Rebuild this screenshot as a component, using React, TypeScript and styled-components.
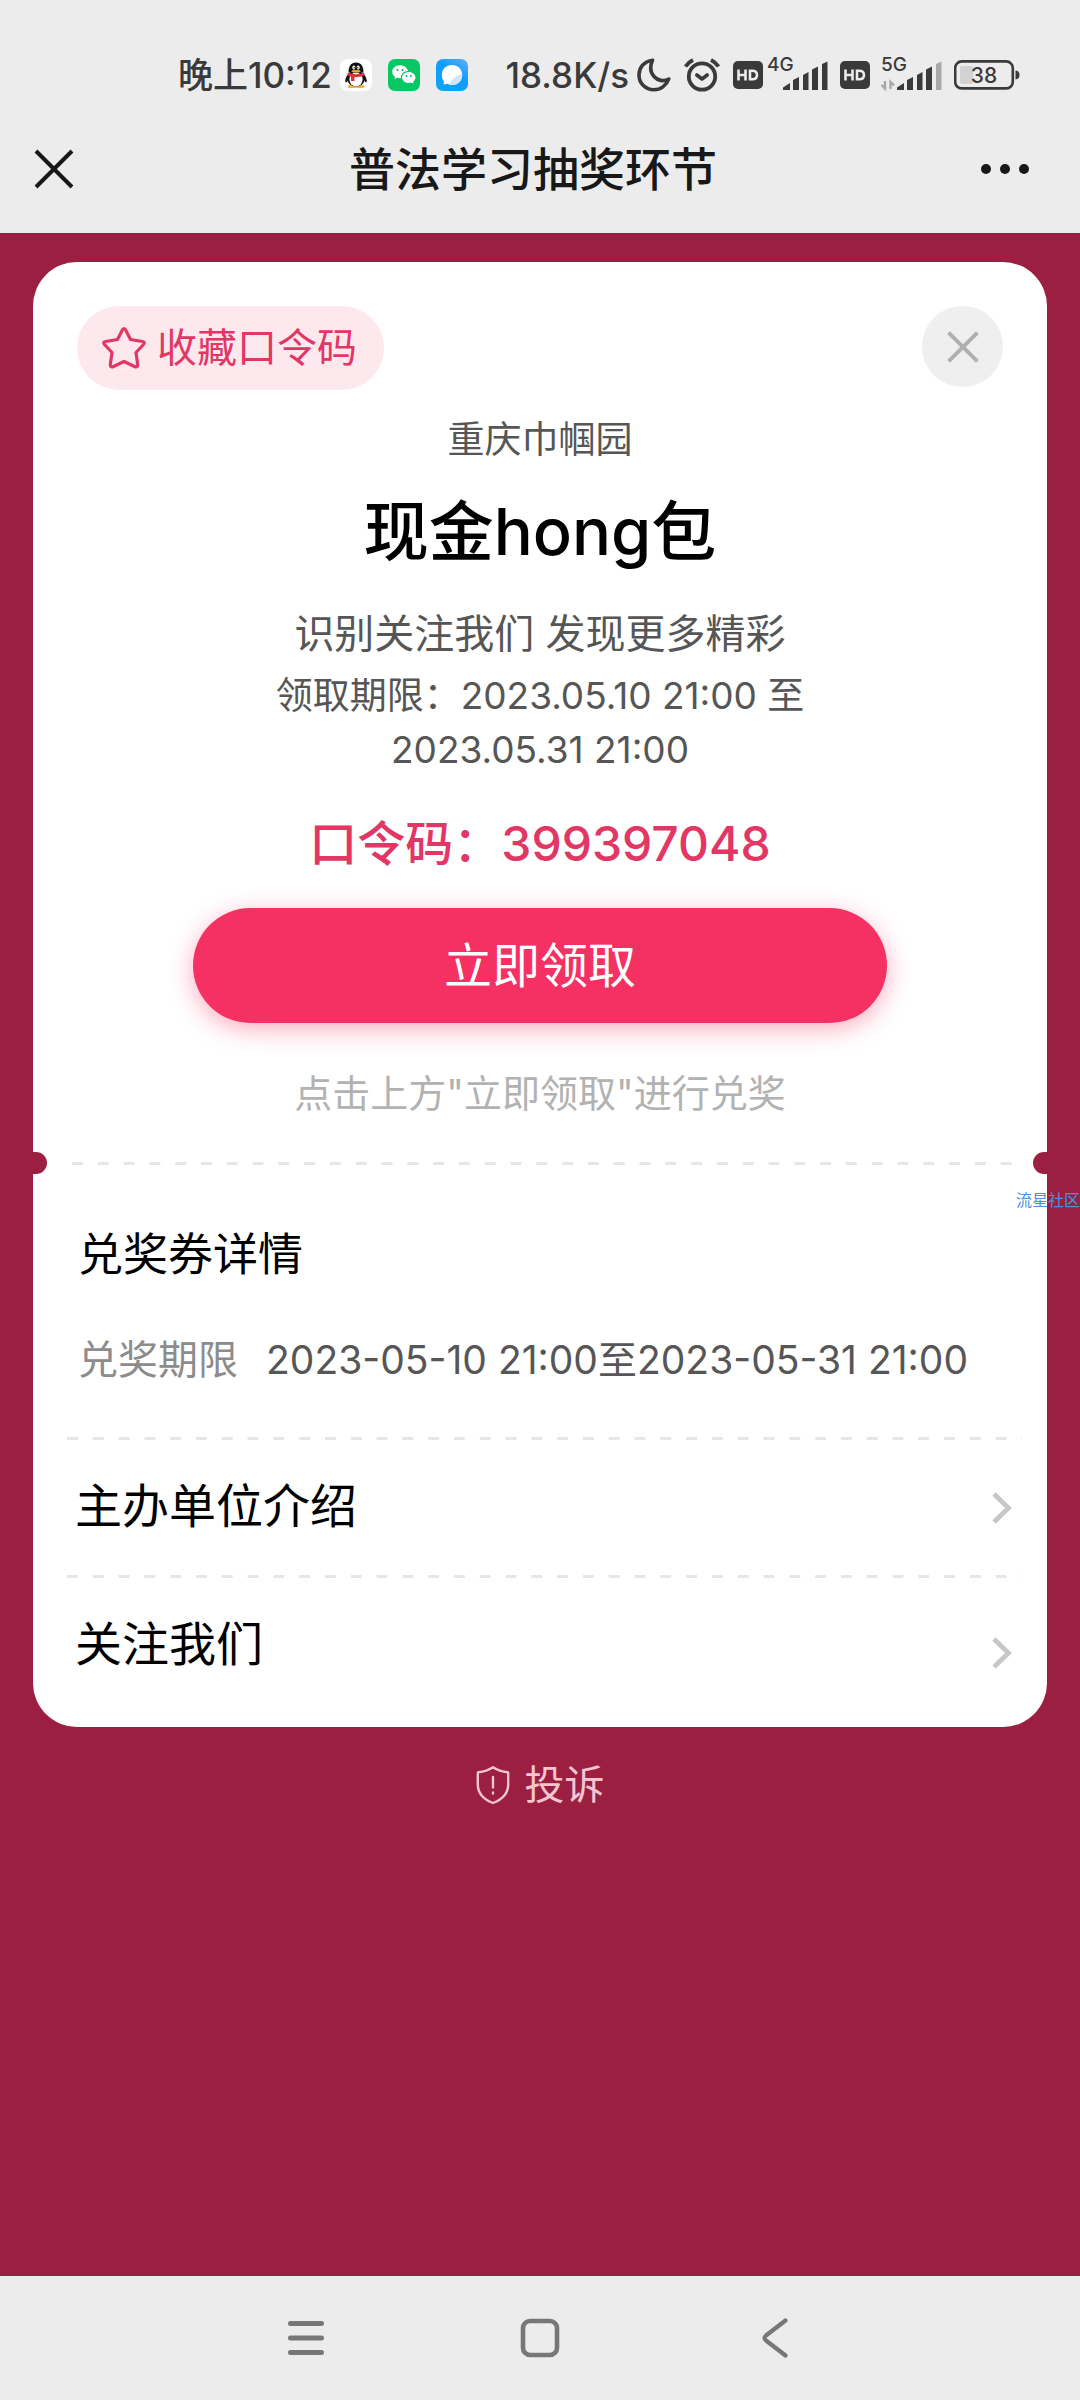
import React from "react";
import styled, { createGlobalStyle } from "styled-components";

const color = {
  bar: "#ececec",
  wine: "#9a1f40",
  accent: "#f53062",
  rose: "#e23765",
  blush: "#fde8ed",
  ink: "#000000",
  text: "#565656",
  status: "#3a3a3a",
};

const GlobalStyle = createGlobalStyle`
  * { box-sizing: border-box; }
  body {
    margin: 0;
    background: ${color.wine};
    font-family: Inter, "Noto Sans CJK SC", sans-serif;
    -webkit-font-smoothing: antialiased;
  }
  h1, h2, p, dl, dt, dd { margin: 0; font-weight: 400; }
  button {
    border: 0;
    padding: 0;
    background: none;
    font: inherit;
    color: inherit;
    cursor: pointer;
  }
  svg { display: block; flex: none; }
`;

const Screen = styled.div`
  position: relative;
  display: flex;
  flex-direction: column;
  min-height: 100vh;
  overflow: hidden;
`;

/* ---------- status bar ---------- */

const StatusBar = styled.div`
  display: flex;
  align-items: center;
  justify-content: space-between;
  height: 104px;
  padding: 46px 60px 0 178px;
  background: ${color.bar};
  color: ${color.status};
  font-size: 35px;
  line-height: 48px;
  font-weight: 500;
  white-space: nowrap;
`;

const StatusGroup = styled.div<{ $gap: number }>`
  display: flex;
  align-items: center;
  gap: ${(p) => p.$gap}px;
`;

const AppIcons = styled.div`
  display: flex;
  gap: 16px;
`;

/* ---------- title bar ---------- */

const TitleBar = styled.header`
  display: grid;
  grid-template-columns: 1fr auto 1fr;
  align-items: center;
  height: 129px;
  padding: 0 48px 0 34px;
  background: ${color.bar};
  color: #181818;
`;

const PageTitle = styled.h1`
  font-size: 46px;
  line-height: 60px;
  font-weight: 500;
`;

const BarButton = styled.button<{ $end?: boolean }>`
  justify-self: ${(p) => (p.$end ? "end" : "start")};
`;

/* ---------- coupon card ---------- */

const Main = styled.main`
  flex: 1;
  display: flex;
  flex-direction: column;
  align-items: center;
  padding: 29px 33px;
  background: ${color.wine};
`;

const Card = styled.section`
  align-self: stretch;
  overflow: hidden;
  border-radius: 44px;
  background: #ffffff;
`;

const Coupon = styled.div`
  display: flex;
  flex-direction: column;
  align-items: center;
  padding: 44px 44px 42px;
  text-align: center;
`;

const CardTop = styled.div`
  display: flex;
  align-self: stretch;
  justify-content: space-between;
  align-items: flex-start;
`;

const SaveButton = styled.button`
  display: flex;
  align-items: center;
  gap: 10px;
  height: 84px;
  padding: 0 27px 0 24px;
  border-radius: 42px;
  background: ${color.blush};
  color: ${color.rose};
  font-size: 40px;
  line-height: 54px;
`;

const DismissButton = styled.button`
  display: grid;
  place-items: center;
  width: 81px;
  height: 81px;
  border-radius: 50%;
  background: #efefef;
`;

const Organizer = styled.p`
  margin-top: 25px;
  color: ${color.text};
  font-size: 37px;
  line-height: 50px;
`;

const PrizeName = styled.h2`
  margin-top: 27px;
  color: ${color.ink};
  font-size: 65px;
  line-height: 80px;
  font-weight: 500;
`;

const Slogan = styled.p`
  margin-top: 35px;
  color: ${color.text};
  font-size: 40px;
  line-height: 54px;
`;

const Period = styled.p`
  max-width: 560px;
  margin-top: 8px;
  color: ${color.text};
  font-size: 37px;
  line-height: 54px;
`;

const Code = styled.p`
  margin-top: 37px;
  color: ${color.rose};
  font-size: 48px;
  line-height: 60px;
  font-weight: 500;
`;

const ClaimButton = styled.button`
  width: 75%;
  height: 115px;
  margin-top: 34px;
  border-radius: 58px;
  background: ${color.accent};
  box-shadow: 0 6px 24px rgba(245, 48, 98, 0.4);
  color: #ffffff;
  font-size: 48px;
  line-height: 60px;
`;

const Hint = styled.p`
  margin-top: 43px;
  color: #b2b2b2;
  font-size: 38px;
  line-height: 54px;
`;

const DashedRule = styled.div<{ $start: number; $end: number }>`
  height: 3px;
  margin: 0 ${(p) => p.$end}px 0 ${(p) => p.$start}px;
  background-image: linear-gradient(90deg, #e6e6e6 11px, transparent 11px);
  background-size: 26px 3px;
  background-repeat: round no-repeat;
`;

const TearLine = styled.div`
  position: relative;

  &::before,
  &::after {
    content: "";
    position: absolute;
    top: -10px;
    width: 26px;
    height: 22px;
    border-radius: 11px;
    background: ${color.wine};
  }
  &::before { left: -12px; }
  &::after { right: -12px; }
`;

const Details = styled.div`
  padding: 60px 44px 50px 45px;
`;

const DetailsTitle = styled.h2`
  color: ${color.ink};
  font-size: 45px;
  line-height: 60px;
`;

const DetailList = styled.dl`
  display: flex;
  gap: 28px;
  margin-top: 48px;
  font-size: 40px;
  line-height: 54px;
  white-space: nowrap;

  dt { color: #8c8c8c; }
  dd { color: ${color.text}; font-size: 39px; }
`;

const LinkRow = styled.button<{ $last?: boolean }>`
  display: flex;
  align-items: center;
  justify-content: space-between;
  width: 100%;
  height: ${(p) => (p.$last ? 149 : 135)}px;
  padding: 0 34px 0 42px;
  color: ${color.ink};
  font-size: 47px;
  line-height: 60px;
`;

const LinkLabel = styled.span`
  align-self: flex-start;
  padding-top: 36px;
`;

const ReportButton = styled.button`
  display: flex;
  align-items: center;
  gap: 15px;
  margin-top: 31px;
  color: #f6c3d0;
  font-size: 40px;
  line-height: 54px;
`;

const Watermark = styled.span`
  position: absolute;
  top: 1188px;
  right: 0;
  color: #4a90e2;
  font-size: 16px;
  line-height: 24px;
  white-space: nowrap;
`;

/* ---------- system navigation ---------- */

const NavBar = styled.nav`
  display: flex;
  justify-content: center;
  align-items: center;
  gap: 194px;
  height: 124px;
  background: ${color.bar};
`;

/* ---------- icons ---------- */

const QQIcon = () => (
  <svg width="32" height="32" viewBox="0 0 32 32" aria-hidden="true">
    <rect width="32" height="32" rx="8" fill="#fff" />
    <ellipse cx="12" cy="27.4" rx="4.6" ry="1.6" fill="#f5b335" />
    <ellipse cx="20" cy="27.4" rx="4.6" ry="1.6" fill="#f5b335" />
    <path d="M8 15C6 18 4.600 21 5.500 23.500C6.500 23.500 7.500 22 8 21ZM24 15C26 18 27.400 21 26.500 23.500C25.500 23.500 24.500 22 24 21Z" fill="#111" />
    <ellipse cx="16" cy="19.500" rx="8.800" ry="8.300" fill="#111" />
    <ellipse cx="16" cy="20.500" rx="6.600" ry="7" fill="#fff" />
    <path d="M8.500 13.500C8.500 7 11 3.500 16 3.500S23.500 7 23.500 13.500Z" fill="#111" />
    <ellipse cx="13.800" cy="8.600" rx="1.500" ry="2.100" fill="#fff" />
    <ellipse cx="18.200" cy="8.600" rx="1.500" ry="2.100" fill="#fff" />
    <circle cx="14.200" cy="8.800" r=".7" fill="#111" />
    <circle cx="17.800" cy="8.800" r=".7" fill="#111" />
    <ellipse cx="16" cy="12.200" rx="4.600" ry="1.300" fill="#f5a623" />
    <path d="M7.800 13.500Q16 17 24.200 13.500L24.500 16.500Q20 18.500 14.500 18V22H11V17.600L7.500 16.500Z" fill="#e0303a" />
  </svg>
);

const WeChatIcon = () => (
  <svg width="32" height="32" viewBox="0 0 32 32" aria-hidden="true">
    <rect width="32" height="32" rx="7" fill="#07c865" />
    <path d="M12 6.200C7.600 6.200 4.200 9.100 4.200 12.700C4.200 14.800 5.300 16.600 7.100 17.800L6.500 20.100L9.200 18.800Q11 19.300 13 19.200C12.500 15.500 15.800 11.900 19.900 12C19.200 8.600 16 6.200 12 6.200Z" fill="#fff" />
    <path d="M20.700 12.900C17 12.900 14.100 15.400 14.100 18.400S17 23.900 20.700 23.900Q22 23.900 23.200 23.500L25.500 24.700L25 22.700C26.600 21.600 27.500 20.100 27.500 18.400C27.500 15.400 24.400 12.900 20.700 12.900Z" fill="#fff" />
    <circle cx="9.500" cy="11" r="1" fill="#07a856" />
    <circle cx="14.500" cy="11" r="1" fill="#07a856" />
    <circle cx="18.500" cy="17" r=".9" fill="#07a856" />
    <circle cx="22.900" cy="17" r=".9" fill="#07a856" />
  </svg>
);

const BubbleIcon = () => (
  <svg width="32" height="32" viewBox="0 0 32 32" aria-hidden="true">
    <defs>
      <linearGradient id="bubbleBg" x1="1" y1="0" x2="0.300" y2="1">
        <stop offset="0" stopColor="#5cb0fb" />
        <stop offset="0.500" stopColor="#109bfb" />
        <stop offset="1" stopColor="#0aa5fa" />
      </linearGradient>
    </defs>
    <rect width="32" height="32" rx="7" fill="url(#bubbleBg)" />
    <path d="M16 6C22 6 26.200 10.200 26.200 16S22 26 16 26Q13.500 26 11.500 24.800L7.600 25.600L7.900 22.300C6.600 20.500 5.800 18.500 5.800 16C5.800 10.200 10 6 16 6Z" fill="#fff" />
    <path d="M26.200 15C21.500 16 15 20 13.500 25.600C20 27.400 26.600 22.600 26.200 15Z" fill="#cfe5f8" />
  </svg>
);

const MoonIcon = () => (
  <svg width="34" height="34" viewBox="0 0 34 34" fill="none" stroke={color.status} strokeWidth="3.600" strokeLinejoin="round" aria-hidden="true">
    <path d="M15.500 2.200C6.500 3.500 2 10 2 17C2 25.500 8.500 31.800 16.800 31.800C23.500 31.800 29.500 27.500 31.800 21C26.500 24 20.500 22.500 17 18.500C13 14 13 8 15.500 2.200Z" />
  </svg>
);

const AlarmIcon = () => (
  <svg width="38" height="34" viewBox="0 0 38 34" fill="none" stroke={color.status} strokeLinecap="round" strokeLinejoin="round" aria-hidden="true">
    <circle cx="19" cy="18.500" r="13.200" strokeWidth="3.800" />
    <path d="M13.800 17L19 21L24.200 17" strokeWidth="3.600" />
    <path d="M2.500 8.500Q5 4.500 10 2M35.500 8.500Q33 4.500 28 2" strokeWidth="3.800" strokeLinecap="butt" />
  </svg>
);

const HdIcon = () => (
  <svg width="30" height="28" viewBox="0 0 30 28" aria-hidden="true">
    <rect width="30" height="28" rx="5" fill={color.status} />
    <path d="M5.500 8.500V19.500M12.500 8.500V19.500M5.500 14H12.500M17 9.700V18.300H19.300Q24 18.300 24 14T19.300 9.700Z" fill="none" stroke="#ececec" strokeWidth="2.600" />
  </svg>
);

const SignalIcon = ({ label, weak }: { label: string; weak?: boolean }) => (
  <svg width="62" height="50" viewBox="0 -8 62 50" aria-label={label}>
    <text x="1" y="13" fontSize="19" fontWeight="500" fill={color.status}>{label}</text>
    {weak && (
      <path d="M1.500 26L5 29.500V22M10.500 30V23L14 26.500" transform="translate(0 1)" fill="none" stroke="#a8a8a8" strokeWidth="2.400" />
    )}
    <path d="M17 29.500L24 25V32H17ZM27 22L33 19V32H27ZM37 17L42.500 14V32H37ZM46 11.500L52 8.500V32H46Z" fill={color.status} />
    <path d="M56 6L61.500 3.500V32H56Z" fill={weak ? "#a8a8a8" : color.status} />
  </svg>
);

const BatteryIcon = () => (
  <svg width="66" height="30" viewBox="0 0 66 30" aria-label="38%">
    <rect x="6" y="6" width="13" height="18" rx="2" fill="#d2d2d2" />
    <rect x="1.200" y="1.400" width="57.600" height="27" rx="6.500" fill="none" stroke={color.status} strokeWidth="2.600" />
    <path d="M61.500 10.500Q65.500 11 65.500 15T61.500 19.500Z" fill={color.status} />
    <text x="30" y="23" fontSize="21" fontWeight="500" textAnchor="middle" fill={color.status}>38</text>
  </svg>
);

const CrossIcon = ({ size, stroke, width }: { size: number; stroke: string; width: number }) => (
  <svg width={size} height={size} viewBox="0 0 40 40" fill="none" stroke={stroke} strokeWidth={width} aria-hidden="true">
    <path d="M2 2L38 38M38 2L2 38" />
  </svg>
);

const MoreIcon = () => (
  <svg width="54" height="14" viewBox="0 0 54 14" fill="#181818" aria-hidden="true">
    <circle cx="8" cy="7" r="5" />
    <circle cx="27" cy="7" r="5" />
    <circle cx="46" cy="7" r="5" />
  </svg>
);

const StarIcon = () => (
  <svg width="46" height="44" viewBox="0 0 46 44" fill="none" stroke={color.rose} strokeWidth="3.200" strokeLinejoin="round" aria-hidden="true">
    <path d="M23 2.500Q24 2.500 24.800 4.200L29.500 13.500L41.500 15.500Q44.500 16.200 42.500 18.500L35 26.500L36.700 38.500Q36.700 42 33.500 40.500L23 35.500L12.500 40.500Q9.300 42 9.300 38.500L11 26.500L3.500 18.500Q1.500 16.200 4.500 15.500L16.500 13.500L21.200 4.200Q22 2.500 23 2.500Z" />
  </svg>
);

const ChevronIcon = () => (
  <svg width="22" height="32" viewBox="0 0 22 32" fill="none" stroke="#c7c7cb" strokeWidth="4.800" aria-hidden="true">
    <path d="M3 2L17.500 16L3 30" />
  </svg>
);

const ShieldIcon = () => (
  <svg width="34" height="40" viewBox="0 0 34 40" fill="none" stroke="#f6c3d0" strokeWidth="2.400" strokeLinejoin="round" strokeLinecap="round" aria-hidden="true">
    <path d="M17 2.200Q23.500 6.500 31.500 7.200Q32.200 7.300 32.200 8V19.500C32.200 28.500 26 34.500 17 38C8 34.500 1.800 28.500 1.800 19.500V8Q1.800 7.300 2.500 7.200Q10.500 6.500 17 2.200Z" />
    <path d="M17 12V22.500M17 27.500V28.500" />
  </svg>
);

const MenuIcon = () => (
  <svg width="40" height="40" viewBox="0 0 40 40" stroke="#777" strokeWidth="5" strokeLinecap="round" aria-hidden="true">
    <path d="M4.500 5.500H35.500M4.500 20H35.500M4.500 34.500H35.500" />
  </svg>
);

const HomeIcon = () => (
  <svg width="40" height="40" viewBox="0 0 40 40" fill="none" stroke="#777" strokeWidth="4.600" aria-hidden="true">
    <rect x="3" y="3" width="34" height="34" rx="7" />
  </svg>
);

const BackIcon = () => (
  <svg width="40" height="40" viewBox="0 0 40 40" fill="none" stroke="#777" strokeWidth="4.200" strokeLinecap="round" aria-hidden="true">
    <path d="M31.500 2.500L12 17.500Q9 20 12 22.500L31.500 37.500" />
  </svg>
);

export default function App() {
  return (
    <Screen>
      <GlobalStyle />
      <StatusBar>
        <StatusGroup $gap={8}>
          <span>晚上10:12</span>
          <AppIcons>
            <QQIcon />
            <WeChatIcon />
            <BubbleIcon />
          </AppIcons>
        </StatusGroup>
        <StatusGroup $gap={12}>
          <StatusGroup $gap={8}>
            <span>18.8K/s</span>
            <MoonIcon />
          </StatusGroup>
          <AlarmIcon />
          <StatusGroup $gap={3}>
            <HdIcon />
            <SignalIcon label="4G" />
          </StatusGroup>
          <StatusGroup $gap={10}>
            <HdIcon />
            <SignalIcon label="5G" weak />
          </StatusGroup>
          <BatteryIcon />
        </StatusGroup>
      </StatusBar>

      <TitleBar>
        <BarButton aria-label="关闭">
          <CrossIcon size={40} stroke="#181818" width={4} />
        </BarButton>
        <PageTitle>普法学习抽奖环节</PageTitle>
        <BarButton $end aria-label="更多">
          <MoreIcon />
        </BarButton>
      </TitleBar>

      <Main>
        <Card>
          <Coupon>
            <CardTop>
              <SaveButton>
                <StarIcon />
                收藏口令码
              </SaveButton>
              <DismissButton aria-label="关闭">
                <CrossIcon size={32} stroke="#b0b0b0" width={5} />
              </DismissButton>
            </CardTop>
            <Organizer>重庆巾帼园</Organizer>
            <PrizeName>现金hong包</PrizeName>
            <Slogan>识别关注我们 发现更多精彩</Slogan>
            <Period>领取期限：2023.05.10 21:00 至 2023.05.31 21:00</Period>
            <Code>口令码：399397048</Code>
            <ClaimButton>立即领取</ClaimButton>
            <Hint>点击上方"立即领取"进行兑奖</Hint>
          </Coupon>
          <TearLine>
            <DashedRule $start={39} $end={20} />
          </TearLine>
          <Details>
            <DetailsTitle>兑奖券详情</DetailsTitle>
            <DetailList>
              <dt>兑奖期限</dt>
              <dd>2023-05-10 21:00至2023-05-31 21:00</dd>
            </DetailList>
          </Details>
          <DashedRule $start={34} $end={25} />
          <LinkRow>
            <LinkLabel>主办单位介绍</LinkLabel>
            <ChevronIcon />
          </LinkRow>
          <DashedRule $start={34} $end={25} />
          <LinkRow $last>
            <LinkLabel>关注我们</LinkLabel>
            <ChevronIcon />
          </LinkRow>
        </Card>
        <ReportButton>
          <ShieldIcon />
          投诉
        </ReportButton>
      </Main>

      <Watermark>流星社区</Watermark>

      <NavBar>
        <BarButton aria-label="最近任务">
          <MenuIcon />
        </BarButton>
        <BarButton aria-label="主屏幕">
          <HomeIcon />
        </BarButton>
        <BarButton aria-label="返回">
          <BackIcon />
        </BarButton>
      </NavBar>
    </Screen>
  );
}
